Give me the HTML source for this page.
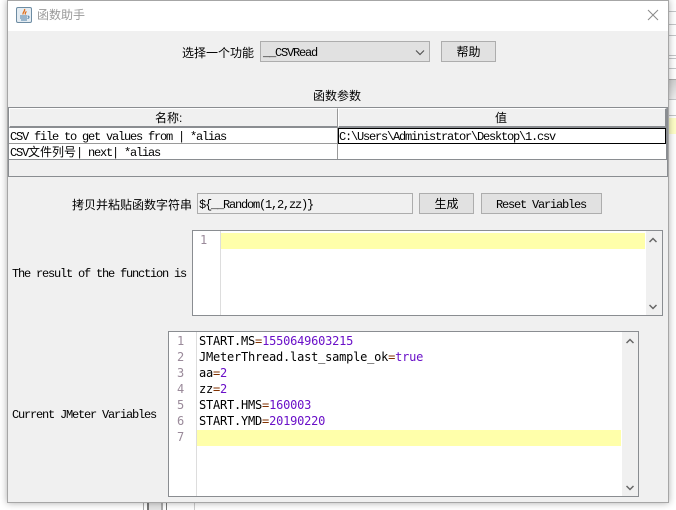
<!DOCTYPE html>
<html><head><meta charset="utf-8">
<style>
html,body{margin:0;padding:0;width:676px;height:510px;overflow:hidden;background:#fff}
div,span{position:absolute;box-sizing:border-box;white-space:pre}
span.i{position:static}
.cjk{font:12px/16px "Liberation Sans","Noto Sans CJK SC",sans-serif;color:#000}
.m{font:12px/16px "Liberation Mono","Noto Sans CJK SC",monospace;letter-spacing:-1.2px;color:#000}
.c{font:12px/16px "DejaVu Sans Mono",monospace;letter-spacing:-.22px;color:#000;left:199px;height:16px}
.c span{position:static}
.p{color:#6a10c8}.e{color:#803000}
.btn{background:#e1e1e1;border:1px solid #adadad;text-align:center}
.n{font:12px/16px "DejaVu Sans Mono",monospace;color:#9a8a9a;height:16px}
.bg{background:#c4c6c8}
</style></head><body>
<!-- background remnants -->
<div class="bg" style="left:669px;top:11px;width:7px;height:1px"></div>
<div class="bg" style="left:669px;top:24px;width:7px;height:1px"></div>
<div class="bg" style="left:669px;top:35px;width:7px;height:1px"></div>
<div class="bg" style="left:669px;top:55px;width:7px;height:1px"></div>
<div class="bg" style="left:669px;top:58px;width:7px;height:1px"></div>
<div class="bg" style="left:669px;top:68px;width:7px;height:1px"></div>
<div style="left:669px;top:79px;width:7px;height:20px;background:linear-gradient(#d0d0d0,#eee);border-top:1px solid #aaa"></div>
<div class="bg" style="left:669px;top:99px;width:7px;height:1px"></div>
<div class="bg" style="left:669px;top:115px;width:7px;height:1px"></div>
<div style="left:669px;top:118px;width:7px;height:16px;background:#ffffc8"></div>
<div style="left:143px;top:502px;width:1px;height:8px;background:#aaa"></div>
<div style="left:147px;top:502px;width:2px;height:8px;background:#777"></div>
<div style="left:149px;top:502px;width:12px;height:8px;background:#e4e4e4"></div>
<div style="left:161px;top:502px;width:2px;height:8px;background:#aaa"></div>
<div style="left:166px;top:502px;width:1px;height:8px;background:#777"></div>
<div style="left:194px;top:502px;width:1px;height:8px;background:#ccc"></div>
<!-- window -->
<div style="left:7px;top:0;width:662px;height:503px;background:#f0f0f0;border:1px solid #a6a6a6;box-shadow:0 0 7px rgba(0,0,0,.32)"></div>
<div style="left:8px;top:1px;width:660px;height:30px;background:#fff"></div>
<svg style="position:absolute;left:16px;top:7px" width="16" height="16" viewBox="0 0 16 16">
<rect x=".5" y=".5" width="15" height="15" rx="1.5" fill="#e4ecf2" stroke="#6d8ca3"/>
<path d="M8.5 2C9.5 4 6.5 5 7 7.5M10.5 4.5C9 5.5 9 6.5 9.5 7.5" fill="none" stroke="#e0701c" stroke-width="1.3"/>
<path d="M4 9h7M4 11h7M5 13h6" stroke="#4d7ea5" stroke-width="1"/>
<path d="M11.5 9c2 0 2 2 0 2.500" fill="none" stroke="#4d7ea5"/>
</svg>
<div class="cjk" style="left:37px;top:7px;color:#999">函数助手</div>
<svg style="position:absolute;left:647px;top:9px" width="12" height="12" viewBox="0 0 12 12"><path d="M1 1L11 11M11 1L1 11" stroke="#8a8a8a" stroke-width="1" fill="none"/></svg>
<!-- top row -->
<div class="cjk" style="left:182px;top:45px">选择一个功能</div>
<div class="btn" style="left:260px;top:41px;width:170px;height:21px"></div>
<div class="m" style="left:263px;top:45px">__CSVRead</div>
<svg style="position:absolute;left:415px;top:49px" width="10" height="7" viewBox="0 0 10 7"><path d="M1 1.500L5 5.500L9 1.500" stroke="#555" stroke-width="1.200" fill="none"/></svg>
<div class="btn cjk" style="left:441px;top:41px;width:55px;height:21px;line-height:21px">帮助</div>
<div class="cjk" style="left:313px;top:88px">函数参数</div>
<!-- table -->
<div style="left:8px;top:107px;width:660px;height:70px;border:1px solid #8a8d91;background:#f0f0f0"></div>
<div style="left:9px;top:108px;width:329px;height:20px;background:#f0f0f0;border:1px solid #fff;border-right-color:#999;border-bottom:2px solid #8a8d91"></div>
<div style="left:338px;top:108px;width:329px;height:20px;background:#f0f0f0;border:1px solid #fff;border-right:2px solid #8a8d91;border-bottom:2px solid #8a8d91"></div>
<div class="cjk" style="left:155px;top:110px">名称:</div>
<div class="cjk" style="left:495px;top:110px">值</div>
<div style="left:9px;top:128px;width:657px;height:32px;background:#fff;border-bottom:1px solid #8a8d91"></div>
<div style="left:9px;top:143px;width:657px;height:1px;background:#9a9a9a"></div>
<div style="left:337px;top:128px;width:1px;height:31px;background:#9a9a9a"></div>
<div style="left:666px;top:128px;width:1px;height:32px;background:#8a8d91"></div>
<div style="left:338px;top:128px;width:328px;height:16px;border:1px solid #000;background:#fff"></div>
<div class="m" style="left:10px;top:129px">CSV file to get values from | *alias</div>
<div class="m" style="left:10px;top:145px">CSV<span class="i" style="letter-spacing:0">文件列号</span>| next| *alias</div>
<div class="m" style="left:339px;top:129px">C:\Users\Administrator\Desktop\1.csv</div>
<!-- function string -->
<div class="cjk" style="left:72px;top:197px">拷贝并粘贴函数字符串</div>
<div style="left:197px;top:193px;width:216px;height:21px;border:1px solid #adadad;background:#f0f0f0"></div>
<div class="m" style="left:199px;top:197px">${__Random(1,2,zz)}</div>
<div class="btn cjk" style="left:419px;top:193px;width:55px;height:21px;line-height:21px">生成</div>
<div class="btn" style="left:481px;top:193px;width:121px;height:21px"></div>
<div class="m" style="left:496px;top:197px">Reset Variables</div>
<!-- result editor -->
<div class="m" style="left:12px;top:266px">The result of the function is</div>
<div style="left:192px;top:230px;width:471px;height:86px;border:1px solid #8a8d91;background:#fff"></div>
<div style="left:220px;top:231px;width:1px;height:84px;background:#ddd"></div>
<div style="left:221px;top:233px;width:424px;height:16px;background:#ffffaa"></div>
<div style="left:646px;top:231px;width:16px;height:84px;background:#f0f0f0"></div>
<div class="n" style="left:200px;top:232px">1</div>
<svg style="position:absolute;left:649px;top:237px" width="8" height="6" viewBox="0 0 8 6"><path d="M.5 5L4 1.500L7.500 5" stroke="#666" stroke-width="1.500" fill="none"/></svg>
<svg style="position:absolute;left:649px;top:304px" width="8" height="6" viewBox="0 0 8 6"><path d="M.5 1L4 4.500L7.500 1" stroke="#666" stroke-width="1.500" fill="none"/></svg>
<!-- variables editor -->
<div class="m" style="left:12px;top:407px">Current JMeter Variables</div>
<div style="left:168px;top:331px;width:471px;height:166px;border:1px solid #8a8d91;background:#fff"></div>
<div style="left:196px;top:332px;width:1px;height:164px;background:#ddd"></div>
<div style="left:197px;top:430px;width:424px;height:16px;background:#ffffaa"></div>
<div style="left:622px;top:332px;width:16px;height:164px;background:#f0f0f0"></div>
<div class="n" style="left:177px;top:333px">1</div>
<div class="n" style="left:177px;top:349px">2</div>
<div class="n" style="left:177px;top:365px">3</div>
<div class="n" style="left:177px;top:381px">4</div>
<div class="n" style="left:177px;top:397px">5</div>
<div class="n" style="left:177px;top:413px">6</div>
<div class="n" style="left:177px;top:429px">7</div>
<div class="c" style="top:333px">START.MS<span class="e">=</span><span class="p">1550649603215</span></div>
<div class="c" style="top:349px">JMeterThread.last_sample_ok<span class="e">=</span><span class="p">true</span></div>
<div class="c" style="top:365px">aa<span class="e">=</span><span class="p">2</span></div>
<div class="c" style="top:381px">zz<span class="e">=</span><span class="p">2</span></div>
<div class="c" style="top:397px">START.HMS<span class="e">=</span><span class="p">160003</span></div>
<div class="c" style="top:413px">START.YMD<span class="e">=</span><span class="p">20190220</span></div>
<svg style="position:absolute;left:626px;top:338px" width="8" height="6" viewBox="0 0 8 6"><path d="M.5 5L4 1.500L7.500 5" stroke="#666" stroke-width="1.500" fill="none"/></svg>
<svg style="position:absolute;left:626px;top:485px" width="8" height="6" viewBox="0 0 8 6"><path d="M.5 1L4 4.500L7.500 1" stroke="#666" stroke-width="1.500" fill="none"/></svg>
</body></html>
